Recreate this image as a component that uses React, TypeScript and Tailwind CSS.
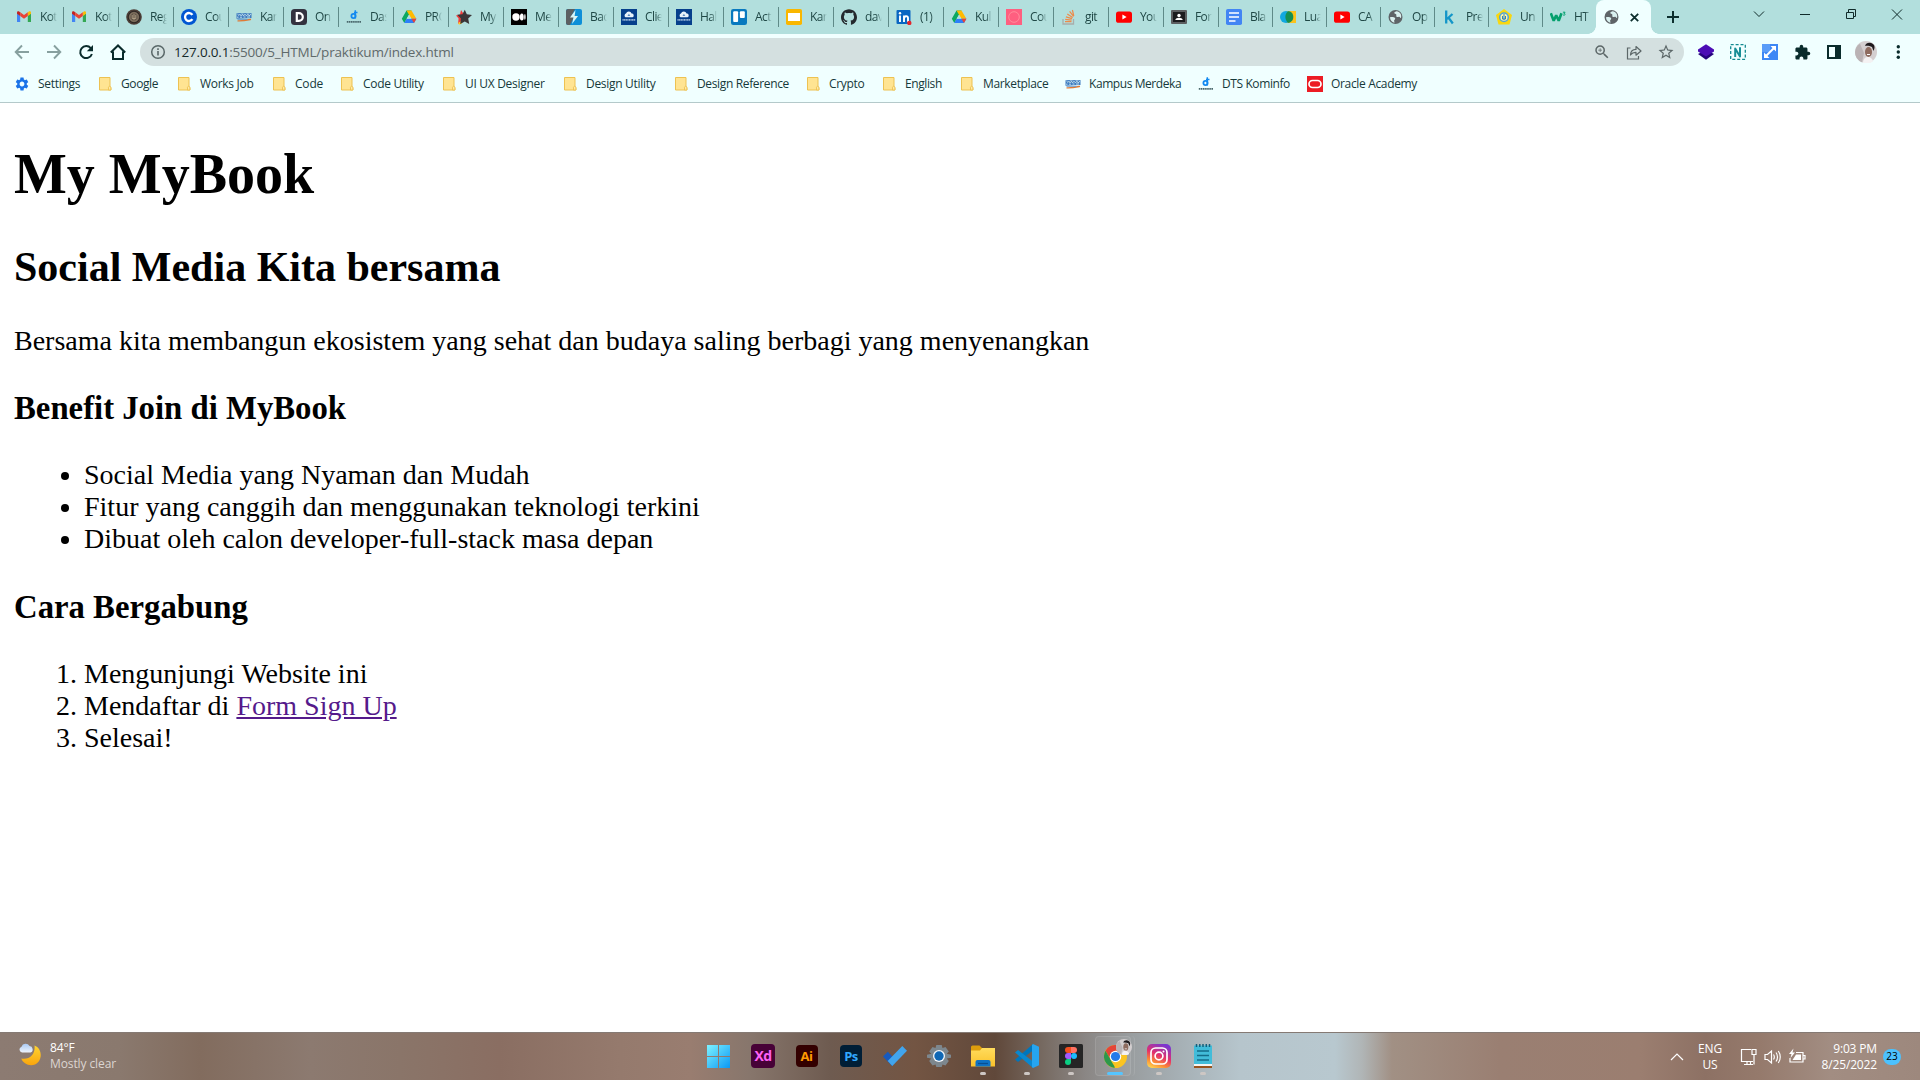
import React from "react";
import { SiGithub } from "react-icons/si";
import { MdSettings, MdExtension, MdZoomIn, MdStarBorder } from "react-icons/md";

type IconProps = { children: React.ReactNode; size?: number; box?: number };

const Glyph = ({ children, size = 16, box = 16 }: IconProps) => (
  <svg width={size} height={size} viewBox={`0 0 ${box} ${box}`} fill="none" className="shrink-0">
    {children}
  </svg>
);

const Gmail = () => (
  <Glyph>
    <path d="M1 4v9h3.200V6.800z" fill="#4285f4" />
    <path d="M15 4v9h-3.200V6.800z" fill="#34a853" />
    <path d="M11.800 3.600V7L15 4.700V3.600C15 2.300 13.600 2 12.800 2.600z" fill="#fbbc04" />
    <path d="M4.200 3.600V7L1 4.700V3.600C1 2.300 2.400 2 3.200 2.600z" fill="#c5221f" />
    <path d="M4.200 7V3.300L8 6.100l3.800-2.800V7L8 9.800z" fill="#ea4335" />
  </Glyph>
);
const Seal = () => (
  <Glyph>
    <circle cx="8" cy="8" r="7.800" fill="#4b3d36" />
    <circle cx="8" cy="8" r="5.800" fill="#5f5347" stroke="#2e2723" />
    <circle cx="8" cy="8" r="4.200" stroke="#a08f78" strokeWidth=".7" />
    <path d="M8 5v6M6.200 6v3.500M9.800 6v3.500M6.200 9.500h3.600" stroke="#b7a78c" strokeWidth=".8" />
  </Glyph>
);
const Coursera = () => (
  <Glyph>
    <circle cx="8" cy="8" r="8" fill="#0056d2" />
    <path d="M11.400 10.200A4 4 0 1 1 11.400 5.800" stroke="#fff" strokeWidth="2.300" />
  </Glyph>
);
const Kampus = () => (
  <Glyph>
    <path d="M.5 4.300l4-.3 1 .5 4-.5 2 .5 4-.5v5l-15 .8z" fill="#3f7cc0" />
    <path d="M1.500 5.200l1.500 1.200 1-1.200 1 1.700 1.500-1.700 1 1.700 1.500-1.700 1.500 1.700 1.500-1.700 1 1.700 2-1.700M1 8.200h1.500M4 8.200h2M7.500 8h2M11 8h3" stroke="#d9f0f2" strokeWidth=".8" />
    <path d="M1.500 11.900c5 .4 9-.6 13.500-1.600" stroke="#e07a35" strokeWidth="1.300" />
    <path d="M1.500 10.500h10" stroke="#5c91c9" strokeWidth=".7" />
  </Glyph>
);
const Domestika = () => (
  <Glyph>
    <rect width="16" height="16" rx="3.500" fill="#33323f" />
    <path d="M5.800 4.100h2.100a3.900 3.900 0 0 1 0 7.800h-2.100z" stroke="#fff" strokeWidth="2.200" />
  </Glyph>
);
const Digitalent = () => (
  <Glyph>
    <circle cx="7.500" cy="7" r="2.100" stroke="#1389f0" strokeWidth="1.800" />
    <path d="M9.300 1.200v8.200M8 3.600h3.500" stroke="#1389f0" strokeWidth="1.500" />
    <path d="M.8 12.800h14.500" stroke="#49676b" strokeWidth="1.700" strokeDasharray="1.600 .5" />
  </Glyph>
);
const Drive = () => (
  <Glyph>
    <path d="M5.500 1.500h5L8 5.800 3.300 14 .8 9.800z" fill="#0da960" />
    <path d="M10.500 1.500l4.900 8.300h-5L5.500 1.500z" fill="#ffba00" />
    <path d="M5.600 9.800h9.800L13 14H3.200z" fill="#2d7ff9" />
    <path d="M10.400 9.800h5L13 14z" fill="#ea4335" />
    <path d="M8 5.800l2.400 4H5.600z" fill="#b2dfdd" />
  </Glyph>
);
const StarMark = () => (
  <Glyph>
    <path d="M5 1l2 3-1 9-4 2 .6-5.500L0 6.500l4-1z" fill="#f23b3b" />
    <path d="M2 14l3-2 1 2.500-3 1.200z" fill="#ffc92e" />
    <path d="M8.800.8l2 4.400 5.200.7-3.800 3.700 1 5.400-4.400-2.500L4.200 15l.7-5.400-3.700-3.800 5.200-.6z" fill="#3b3638" />
  </Glyph>
);
const Medium = () => (
  <Glyph>
    <rect width="16" height="16" fill="#000" />
    <circle cx="5" cy="8" r="3.700" fill="#fff" />
    <ellipse cx="10.800" cy="8" rx="1.900" ry="3.500" fill="#fff" />
    <ellipse cx="13.900" cy="8" rx=".7" ry="3.100" fill="#fff" />
  </Glyph>
);
const Bolt = () => (
  <Glyph>
    <rect width="16" height="16" rx="2" fill="#0d8fd8" />
    <path d="M2 0h7L5 8h3l-4 8H2a2 2 0 0 1-2-2V2a2 2 0 0 1 2-2z" fill="#5c6062" />
    <path d="M9.500 1L4 8.500h3.500L6 15l6-8H8.600z" fill="#d9f4f5" />
  </Glyph>
);
const CloudHost = () => (
  <Glyph>
    <rect width="16" height="16" fill="#063f8c" />
    <path d="M4.500 8.200a2 2 0 0 1 .5-3.600 3 3 0 0 1 5.600-.2 2 2 0 0 1 1 3.800z" fill="#e8f2fb" />
    <path d="M7.900 4.800L6.500 7h2.800z" fill="#5c8ac0" />
    <path d="M1.500 10.800h13" stroke="#9cb9da" strokeWidth="1.700" strokeDasharray="1.200 .4" />
  </Glyph>
);
const Trello = () => (
  <Glyph>
    <rect width="16" height="16" rx="2.200" fill="#0879bf" />
    <rect x="2.200" y="2.200" width="4.900" height="10.800" rx="1" fill="#fff" />
    <rect x="8.900" y="2.200" width="4.900" height="6.800" rx="1" fill="#fff" />
  </Glyph>
);
const Slides = () => (
  <Glyph>
    <rect width="16" height="16" rx="1.800" fill="#f9b700" />
    <rect x="2" y="4" width="12" height="8" fill="#fff" />
  </Glyph>
);
const Github = () => <SiGithub size={16} color="#24292e" className="shrink-0" />;
const LinkedIn = () => (
  <Glyph>
    <rect x=".5" y="1" width="14" height="14" rx="1" fill="#0a66c2" />
    <path d="M4 6.500V13M8 13V6.500M8 10C8 6.500 12 6.500 12 9v4" stroke="#fff" strokeWidth="1.900" />
    <circle cx="4" cy="4.300" r="1.200" fill="#fff" />
    <circle cx="13.300" cy="14" r="2.200" fill="#e3242b" />
  </Glyph>
);
const PinkRing = () => (
  <Glyph>
    <rect width="16" height="16" fill="#ff5f80" />
    <circle cx="8" cy="8" r="5.300" stroke="#ff97a2" strokeWidth=".8" />
  </Glyph>
);
const StackOverflow = () => (
  <Glyph>
    <path d="M2 10v5h10.500v-5" stroke="#a9adab" strokeWidth="1.300" />
    <path d="M4 12.700h6.500M4.200 10.400l6.400.7M4.900 7.900l6.200 1.800M6.300 5l5.400 3.400M8.600 2.400l4 5M11.400 1l1.400 6" stroke="#ed8b4a" strokeWidth="1.200" />
  </Glyph>
);
const Youtube = () => (
  <Glyph>
    <rect y="2.400" width="16" height="11.400" rx="2.600" fill="#f00" />
    <path d="M6.400 5.600v4.900l4.200-2.400z" fill="#fff" />
  </Glyph>
);
const Classroom = () => (
  <Glyph>
    <rect y="1" width="16" height="14" rx="1" fill="#5c5f61" />
    <rect x="2" y="3" width="12" height="10" fill="#1b1c1e" />
    <circle cx="8" cy="6.500" r="1.700" fill="#fff" />
    <path d="M4.300 11c.4-3 7-3 7.400 0z" fill="#fff" />
  </Glyph>
);
const Docs = () => (
  <Glyph>
    <rect width="16" height="16" rx="1.800" fill="#4285f4" />
    <path d="M3 4h10M3 8h10M3 12h6.500" stroke="#fff" strokeWidth="1.500" />
  </Glyph>
);
const Overlap = () => (
  <Glyph>
    <path d="M6 2h10v12H6z" fill="#fcc21b" />
    <circle cx="6" cy="8" r="6" fill="#12a8e0" />
    <path d="M8 2.300h1.200A6 6 0 0 1 9.200 13.700H8C4.500 11 4.500 5 8 2.300z" fill="#168f51" />
  </Glyph>
);
const Globe = () => (
  <Glyph>
    <circle cx="7.500" cy="8" r="7" fill="#5f6468" />
    <path d="M2 8.300c1.500-.6 4-.5 5 .7.800 1.200-.8 1.600-.9 2.700-.1.900.8 1.400.2 2C3.800 13 2 11 2 8.300z" fill="#d9f0ef" />
    <path d="M8.600 2.200c-1 .6-2.400.6-2.300 1.800.1 1 1.600.5 2 1.400.5 1.100-.8 1.500.4 2.300 1 .6 1.500-.3 2.600 0 .9.300.8 1.500 1.700 1.200C14 5.500 12 2.700 8.600 2.200z" fill="#d9f0ef" />
  </Glyph>
);
const Kaggle = () => (
  <Glyph>
    <path d="M4.200 1.500v13M10.500 5l-5.500 5M6.500 8.600l4.300 5.900" stroke="#1496c8" strokeWidth="2.300" />
  </Glyph>
);
const Campus = () => (
  <Glyph>
    <path d="M8 0l8 6-2.500 9.500h-11L0 6z" fill="#f9d70f" />
    <circle cx="8" cy="8.300" r="4.300" fill="#fff4a8" stroke="#55a5d5" strokeWidth="1.500" />
    <path d="M8 5v6M6.500 7v3h3V7" stroke="#3384b8" strokeWidth="1" />
  </Glyph>
);
const W3 = () => (
  <Glyph>
    <path d="M.8 4.200l2.900 7.500 2.500-5.500 2.500 5.500 2.800-7.500" stroke="#04a06d" strokeWidth="2.600" strokeLinejoin="bevel" />
    <path d="M12.900 3.200h2.200l-1.200 1.200c2 .1 1.500 2.300-.8 1.600" stroke="#04a06d" strokeWidth="1" />
  </Glyph>
);
const Folder = () => (
  <Glyph>
    <path d="M2.500 1.500h10.500v9.500l.9.500v2.500H2.500z" fill="#ffe492" stroke="#edc252" />
    <path d="M11.500 14v-2.800l1.200-1.200 1.200 1.200V14z" fill="#ffe9a5" stroke="#edc252" strokeWidth=".9" />
  </Glyph>
);
const Oracle = () => (
  <Glyph>
    <rect width="16" height="16" fill="#ec1c24" />
    <rect x="2" y="4.500" width="12" height="7" rx="3.500" stroke="#fff" strokeWidth="1.700" />
  </Glyph>
);
const Gear = () => <MdSettings size={16} color="#1a73e8" className="shrink-0" />;

const wideTabs: [string, React.FC][] = [
  ["Kot", Gmail], ["Kot", Gmail], ["Reg", Seal], ["Cou", Coursera], ["Kar", Kampus], ["On", Domestika],
  ["Das", Digitalent], ["PRO", Drive], ["My", StarMark], ["Me", Medium], ["Bac", Bolt], ["Clie", CloudHost],
  ["Hal", CloudHost], ["Act", Trello], ["Kar", Slides], ["dav", Github], ["(1)", LinkedIn], ["Kul", Drive],
  ["Cou", PinkRing], ["git", StackOverflow], ["You", Youtube], ["For", Classroom],
];
const narrowTabs: [string, React.FC][] = [
  ["Bla", Docs], ["Lua", Overlap], ["CA", Youtube], ["Op", Globe], ["Pre", Kaggle], ["Un", Campus], ["HT", W3],
];

const bookmarks: [string, React.FC, string, string][] = [
  ["Settings", Gear, "w-[83px]", "tracking-[-0.3px]"],
  ["Google", Folder, "w-[79px]", "tracking-[-0.4px]"],
  ["Works Job", Folder, "w-[95px]", "tracking-[-0.3px]"],
  ["Code", Folder, "w-[68px]", "tracking-[-0.2px]"],
  ["Code Utility", Folder, "w-[102px]", "tracking-[-0.3px]"],
  ["UI UX Designer", Folder, "w-[121px]", "tracking-[-0.3px]"],
  ["Design Utility", Folder, "w-[111px]", "tracking-[-0.3px]"],
  ["Design Reference", Folder, "w-[132px]", "tracking-[-0.35px]"],
  ["Crypto", Folder, "w-[76px]", "tracking-[-0.3px]"],
  ["English", Folder, "w-[78px]", "tracking-[-0.4px]"],
  ["Marketplace", Folder, "w-[106px]", "tracking-[-0.35px]"],
  ["Kampus Merdeka", Kampus, "w-[133px]", "tracking-[-0.43px]"],
  ["DTS Kominfo", Digitalent, "w-[109px]", "tracking-[-0.4px]"],
  ["Oracle Academy", Oracle, "w-[110px]", "tracking-[-0.34px]"],
];

function Tab({ label, Icon, first, width }: { label: string; Icon: React.FC; first?: boolean; width: string }) {
  return (
    <div className={`flex h-[34px] shrink-0 items-center ${width}`}>
      <div className={`h-5 w-px ${first ? "" : "bg-[#5f8a88]"}`} />
      <div className="ml-[7px]">
        <Icon />
      </div>
      <div className="ml-2 w-[18px] whitespace-nowrap text-[12px] leading-4 tracking-[-0.6px] text-[#1f4745] [mask-image:linear-gradient(to_right,#000_60%,transparent_94%)]">
        {label}
      </div>
    </div>
  );
}

function TabStrip() {
  return (
    <div className="flex h-[34px] bg-[#b2dfdd] pl-2">
      {wideTabs.map(([label, Icon], i) => (
        <Tab key={i} label={label} Icon={Icon} first={i === 0} width="w-[55px]" />
      ))}
      {narrowTabs.map(([label, Icon], i) => (
        <Tab key={i} label={label} Icon={Icon} width="w-[54px]" />
      ))}
      <div className="relative flex h-[34px] w-[55px] shrink-0 items-center rounded-t-lg bg-[#f0ffff] pl-2">
        <div className="absolute bottom-0 -left-2 size-2 bg-[radial-gradient(circle_at_0_0,#b2dfdd_7.5px,#f0ffff_8px)]" />
        <div className="absolute -right-2 bottom-0 size-2 bg-[radial-gradient(circle_at_100%_0,#b2dfdd_7.5px,#f0ffff_8px)]" />
        <Globe />
        <svg width="9" height="9" viewBox="0 0 9 9" className="ml-2.5" stroke="#0d2f2e" strokeWidth="1.800">
          <path d="M.8.800l7.400 7.400M8.200.8L.8 8.200" />
        </svg>
      </div>
      <svg width="12" height="12" viewBox="0 0 12 12" className="mt-[11px] ml-4 shrink-0" stroke="#0d2f2e" strokeWidth="2">
        <path d="M6 0v12M0 6h12" />
      </svg>
      <div className="ml-[57px] flex h-7 shrink-0 items-center">
        {[
          "M18 11.500l5 5 5-5",
          "M18 14.500h10",
          "M18.500 12.500h7v6h-7zM20.500 12.500v-3h7v7h-2",
          "M18 9.500l10 10M28 9.500l-10 10",
        ].map((d) => (
          <svg key={d} width="46" height="28" viewBox="0 0 46 28" fill="none" stroke="#102b2a">
            <path d={d} />
          </svg>
        ))}
      </div>
    </div>
  );
}

function Portrait({ size }: { size: number }) {
  return (
    <Glyph size={size} box={22}>
      <circle cx="11" cy="11" r="11" fill="#d4cfd0" />
      <path d="M0 11a11 11 0 0 0 7 10.200L9 12 5 2.800A11 11 0 0 0 0 11z" fill="#bab3b5" />
      <ellipse cx="13.500" cy="11" rx="3.500" ry="5" fill="#8e6c60" />
      <path d="M10 5C11 1.500 15 1 18 3c2 1.500 2 4 .5 7l-1.500-4c-2-1-5-1.500-7-1z" fill="#1e1a1d" />
      <path d="M8 22c0-5 3-6 5-6s5 2 5 4.500A11 11 0 0 1 8 22z" fill="#f4f2f3" />
      <path d="M12 13.500h3" stroke="#fff" />
    </Glyph>
  );
}

function Toolbar() {
  return (
    <div className="flex h-9 items-center bg-[#f0ffff] pl-3.5">
      <div className="flex w-[126px] shrink-0 items-center gap-4">
        <Glyph>
          <path d="M15 8H2M8 1.500L1.700 8 8 14.500" stroke="#87a09f" strokeWidth="1.900" />
        </Glyph>
        <Glyph>
          <path d="M1 8h13M8 1.500L14.300 8 8 14.500" stroke="#87a09f" strokeWidth="1.900" />
        </Glyph>
        <Glyph>
          <path d="M12.800 4.200A6 6 0 1 0 13.900 10" stroke="#0a2c2c" strokeWidth="2" />
          <path d="M15 1v6.300H8.800z" fill="#0a2c2c" />
        </Glyph>
        <Glyph>
          <path d="M.8 8.500L8 1.500l7.200 7M3 7.500V15h10V7.500" stroke="#0a2c2c" strokeWidth="2" />
        </Glyph>
      </div>
      <div className="flex h-7 w-[1544px] shrink-0 items-center rounded-full bg-[#d4e0e0] pl-2.5">
        <Glyph>
          <circle cx="8" cy="8" r="6.300" stroke="#596768" strokeWidth="1.500" />
          <path d="M8 7v4.500M8 4.200v1.700" stroke="#596768" strokeWidth="1.600" />
        </Glyph>
        <div className="ml-2 text-[13.500px] leading-5 tracking-[-0.2px] whitespace-nowrap text-[#5f6a6b]">
          <span className="text-[#14292a]">127.0.0.1</span>:5500/5_HTML/praktikum/index.html
        </div>
        <div className="mr-[9px] ml-auto flex items-center gap-[15px]">
          <MdZoomIn size={18} color="#5c6768" />
          <Glyph>
            <path d="M4.500 4H1.500v11h11v-3" stroke="#5c6768" strokeWidth="1.200" />
            <path d="M4.500 11c.2-4 2-5.600 5.500-5.600V2.500L15 7l-5 4.200V8.400c-2.500-.1-4 .600-5.500 2.600z" stroke="#5c6768" strokeWidth="1.200" strokeLinejoin="round" />
          </Glyph>
          <MdStarBorder size={18} color="#5c6768" />
        </div>
      </div>
      <div className="ml-3.5 flex shrink-0 items-center gap-4">
        <Glyph>
          <path d="M0 10l8-4 8 4-8 5.800z" fill="#25047c" />
          <path d="M8 .2L16 5.500v2L8 12.500 0 7.500v-2z" fill="#4b0db5" />
        </Glyph>
        <Glyph>
          <rect x=".7" y=".7" width="14.600" height="14.600" stroke="#148a91" strokeWidth="1.300" strokeDasharray="3 1.900" />
          <path d="M5.200 13V4.500l4.800 8V3.200" stroke="#178e96" strokeWidth="2" strokeLinejoin="round" />
        </Glyph>
        <Glyph>
          <rect width="16" height="16" fill="#3d87f5" />
          <path d="M0 0h8v8H0z" fill="#5a9cf8" />
          <path d="M4 12l8-8" stroke="#fff" strokeWidth="2" />
          <path d="M8.500 2H14v5.500zM2 8.500V14h5.500z" fill="#fff" />
        </Glyph>
        <MdExtension size={17} color="#0a2c2c" className="-mr-px" />
        <Glyph>
          <path d="M2 2h12v12H2z" stroke="#0a2c2c" strokeWidth="2" />
          <path d="M9 2h5v12H9z" fill="#0a2c2c" />
        </Glyph>
        <div className="-mx-[3px]">
          <Portrait size={22} />
        </div>
        <Glyph>
          <circle cx="8.300" cy="2.800" r="1.700" fill="#0a2c2c" />
          <circle cx="8.300" cy="8" r="1.700" fill="#0a2c2c" />
          <circle cx="8.300" cy="13.200" r="1.700" fill="#0a2c2c" />
        </Glyph>
      </div>
    </div>
  );
}

function BookmarkBar() {
  return (
    <div className="flex h-[33px] border-b border-[#b4c9ca] bg-[#f0ffff] pb-px pl-3.5 text-[12px] text-[#16393a]">
      {bookmarks.map(([label, Icon, cell, tracking]) => (
        <div key={label} className={`flex h-7 shrink-0 items-center gap-2 whitespace-nowrap ${cell} ${tracking}`}>
          <Icon />
          {label}
        </div>
      ))}
    </div>
  );
}

function PageContent() {
  return (
    <main className="flow-root h-[929px] bg-white px-3.5 font-['Liberation_Serif',serif] text-[28px] leading-[normal] text-black">
      <h1 className="mt-[38.500px] mb-[37px] text-[56px] font-bold">My MyBook</h1>
      <h2 className="mb-[34.400px] text-[42px] font-bold">Social Media Kita bersama</h2>
      <p className="my-7">Bersama kita membangun ekosistem yang sehat dan budaya saling berbagi yang menyenangkan</p>
      <h3 className="mt-[33.500px] mb-[32px] text-[32.760px] font-bold">Benefit Join di MyBook</h3>
      <ul className="my-7 list-disc pl-[70px]">
        <li>Social Media yang Nyaman dan Mudah</li>
        <li>Fitur yang canggih dan menggunakan teknologi terkini</li>
        <li>Dibuat oleh calon developer-full-stack masa depan</li>
      </ul>
      <h3 className="mt-[33.500px] mb-[32px] text-[32.760px] font-bold">Cara Bergabung</h3>
      <ol className="my-7 list-decimal pl-[70px]">
        <li>Mengunjungi Website ini</li>
        <li>
          Mendaftar di <a className="text-[#551a8b] underline" href="#signup">Form Sign Up</a>
        </li>
        <li>Selesai!</li>
      </ol>
    </main>
  );
}

function AdobeTile({ label, className }: { label: string; className: string }) {
  return (
    <div className={`flex items-center justify-center rounded-[4px] leading-none font-bold tracking-[-0.5px] ${className}`}>
      {label}
    </div>
  );
}

function Slot({ children, running }: { children: React.ReactNode; running?: boolean }) {
  return (
    <div className="flex h-[47px] w-11 flex-col items-center pt-[11px]">
      <div className="flex h-6 items-center justify-center">{children}</div>
      {running && <div className="mt-1 h-[3px] w-1.5 rounded-full bg-[#cdc7c4]" />}
    </div>
  );
}

const TrayStroke = ({ d, w }: { d: string; w: number }) => (
  <svg width={w} height="18" viewBox={`0 0 ${w} 18`} fill="none" stroke="#fff" strokeWidth="1.200" className="shrink-0">
    <path d={d} />
  </svg>
);

function Taskbar() {
  return (
    <footer className="flex h-12 border-t border-[#857a74] bg-[linear-gradient(90deg,#8c7b72_0px,#8a796e_120px,#826c5e_200px,#8c7a70_310px,#8a7569_400px,#8a6e62_500px,#957a6d_620px,#997d70_690px,#87766c_750px,#6e5b50_830px,#735543_915px,#60483a_995px,#75685f_1040px,#8a8684_1085px,#999d9f_1130px,#a6b0b5_1180px,#b6c5cc_1240px,#b8c8cf_1335px,#b0b5b6_1362px,#a19084_1392px,#9a7f72_1500px,#9b7e70_1640px,#8d7164_1705px,#957a6c_1760px,#a28d82_1830px,#9d887d_1920px)] text-[12px] text-white">
      <div className="flex w-[697px] shrink-0 pl-[18px]">
        <svg width="24" height="24" viewBox="0 0 24 24" className="mt-[9px]">
          <defs>
            <linearGradient id="moon" x1="0" y1="0" x2="0" y2="1"><stop stopColor="#ffd532" /><stop offset="1" stopColor="#f9a50d" /></linearGradient>
            <linearGradient id="cloud" x1="0" y1="0" x2="0" y2="1"><stop stopColor="#a9c9f5" /><stop offset="1" stopColor="#eef4fc" /></linearGradient>
          </defs>
          <path d="M16.500 3.500c8 3 8.500 15 .5 19-6 2-12-1-13.700-6C12 18 17.500 12 16.500 3.500z" fill="url(#moon)" />
          <path d="M4 10.500a3 3 0 0 1-.5-5.800 4.300 4.300 0 0 1 8-.6 3.300 3.300 0 0 1 1 6.400z" fill="url(#cloud)" />
        </svg>
        <div className="mt-[7px] ml-2 leading-4 tracking-[-0.1px]">
          <div>84°F</div>
          <div className="text-[#dcd5d1]">Mostly clear</div>
        </div>
      </div>
      <div className="flex shrink-0">
        <Slot>
          <svg width="23" height="23" viewBox="0 0 23 23" className="mr-px">
            <defs><linearGradient id="win" x1="0" y1="0" x2="1" y2="1"><stop stopColor="#7ef2ff" /><stop offset="1" stopColor="#0b98f5" /></linearGradient></defs>
            <path d="M0 0h11v11H0zM12 0h11v11H12zM0 12h11v11H0zM12 12h11v11H12z" fill="url(#win)" />
          </svg>
        </Slot>
        <Slot><AdobeTile label="Xd" className="size-6 bg-[#470137] text-[14px] text-[#ff61f6]" /></Slot>
        <Slot><AdobeTile label="Ai" className="mr-px size-[22px] bg-[#330000] text-[13px] text-[#ff9a00]" /></Slot>
        <Slot><AdobeTile label="Ps" className="size-[22px] bg-[#001e36] text-[13px] text-[#31a8ff]" /></Slot>
        <Slot>
          <svg width="24" height="20" viewBox="0 0 24 20">
            <path d="M0 10.500l4.800-4.800 8.200 8.600-4 5.700z" fill="#185abd" />
            <path d="M4.700 15L19.300 0 24 4.700 9.300 20z" fill="#41a5ee" />
          </svg>
        </Slot>
        <Slot>
          <svg width="24" height="24" viewBox="0 0 24 24">
            <path d="M9.300 1h5.400l.8 3 3-1 3.300 4.500-2 2.300 4.200 1v2.900l-4.200.800 2 2.500-3.300 4.500-3-1-.8 2.500H9.300l-.8-2.500-3 1L2.200 17l2-2.500-4.200-.8v-2.900l4.200-1-2-2.300L5.500 3l3 1z" fill="#7d878e" />
            <circle cx="12" cy="12" r="6" fill="#f3f7fb" />
            <circle cx="12" cy="12" r="4.700" fill="#0f67b5" />
          </svg>
        </Slot>
        <Slot running>
          <svg width="24" height="24" viewBox="0 0 24 24">
            <defs><linearGradient id="folder" x1="0" y1="0" x2="0" y2="1"><stop stopColor="#ffdc5d" /><stop offset="1" stopColor="#fbc22b" /></linearGradient></defs>
            <path d="M0 3a1.500 1.500 0 0 1 1.500-1.500h7L11 4v3H0z" fill="#dd9d0c" />
            <path d="M0 6.500h9L11 4h13v18.500H0z" fill="url(#folder)" />
            <path d="M4.500 22.500V18a2 2 0 0 1 2-2h11a2 2 0 0 1 2 2v4.500z" fill="#0e72c4" />
            <path d="M7 19.500h10" stroke="#084f92" strokeWidth="1.300" />
          </svg>
        </Slot>
        <Slot running>
          <svg width="24" height="24" viewBox="0 0 24 24">
            <path d="M18 0v6.500L3 18 0 15.500z" fill="#0076bc" />
            <path d="M0 8.500L3 6l15 11.500V24z" fill="#0888d1" />
            <path d="M18 0l6 2.800v18.400L18 24l-1-1V1z" fill="#26a5f0" />
          </svg>
        </Slot>
        <Slot running>
          <svg width="24" height="24" viewBox="0 0 24 24">
            <rect width="24" height="24" rx="1.500" fill="#252525" />
            <path d="M12 3H9a3 3 0 0 0 0 6h3z" fill="#f24e1e" />
            <path d="M12 3h3a3 3 0 0 1 0 6h-3z" fill="#ff7262" />
            <path d="M12 9H9a3 3 0 0 0 0 6h3z" fill="#a259ff" />
            <circle cx="15" cy="12" r="3" fill="#1abcfe" />
            <path d="M9 15h3v3a3 3 0 1 1-3-3z" fill="#0acf83" />
          </svg>
        </Slot>
        <div className="relative flex h-[47px] w-11 flex-col items-center">
          <div className="absolute top-[3px] left-[2px] h-10 w-9 rounded-[4px] border border-white/10 bg-white/5" />
          <div className="absolute top-[3px] left-[36px] h-10 w-1.5 rounded-r-[4px] border-r border-white/10" />
          <svg width="23" height="23" viewBox="0 0 24 24" className="mt-3">
            <circle cx="12" cy="12" r="12" fill="#fbc116" />
            <path d="M1.600 6A12 12 0 0 1 22.400 6H12L6.800 15z" fill="#e33b2e" />
            <path d="M1.600 6l5.200 9 5.200 3-1 6A12 12 0 0 1 1.600 6z" fill="#229342" />
            <path d="M12 24l5.200-9L12 18l-5 -2z" fill="#fbc116" />
            <circle cx="12" cy="12" r="6" fill="#fff" />
            <circle cx="12" cy="12" r="4.800" fill="#1a73e8" />
          </svg>
          <div className="absolute top-1.5 left-[23px]"><Portrait size={16} /></div>
          <div className="mt-1 h-[3px] w-4 rounded-full bg-[#4cc2ff]" />
        </div>
        <Slot running>
          <svg width="24" height="24" viewBox="0 0 24 24" fill="none">
            <defs>
              <linearGradient id="insta" x1=".2" y1="1" x2=".65" y2="0"><stop stopColor="#ffd24f" /><stop offset=".25" stopColor="#fb8a35" /><stop offset=".55" stopColor="#e4306b" /><stop offset="1" stopColor="#7a35d1" /></linearGradient>
            </defs>
            <rect width="24" height="24" rx="5" fill="url(#insta)" />
            <rect x="4" y="4" width="16" height="16" rx="4.500" stroke="#fff" strokeWidth="1.700" />
            <circle cx="12" cy="12" r="3.900" stroke="#fff" strokeWidth="1.700" />
            <circle cx="16.500" cy="7.500" r="1" fill="#fff" />
          </svg>
        </Slot>
        <Slot running>
          <svg width="18" height="24" viewBox="0 0 18 24">
            <path d="M0 1.500h18V21H0z" fill="#42bcd9" />
            <path d="M0 20h18v2H0z" fill="#f4f4f2" />
            <path d="M0 22h18v2H0z" fill="#99521c" />
            <path d="M2.500 0v3M5.800 0v3M9 0v3M12.300 0v3M15.500 0v3" stroke="#145f7b" strokeWidth="1.500" />
            <path d="M3 7h12M3 11.500h12M3 16h12" stroke="#146c89" strokeWidth="1.500" />
          </svg>
        </Slot>
      </div>
      <div className="flex grow items-center pl-[445px]">
        <TrayStroke w={14} d="M1 12l6-6 6 6" />
        <div className="ml-[13px] w-[26px] text-center leading-4 tracking-[-0.1px]">ENG<br />US</div>
        <div className="ml-[17px] flex gap-[7px]">
          <TrayStroke w={17} d="M11 1.500H1.500v12H13M4 16.500h9M7 13.500v3M10.500 13.500v3M12 1.500h4v5h-4zM14 6.500v10" />
          <TrayStroke w={17} d="M1 6.500h2.500L7.500 3v12l-4-3.500H1zM9.500 6.500c1 1.500 1 3.500 0 5M12 4.500c2 2.500 2 6.500 0 9M14.300 3c2.600 3.500 2.600 8.500 0 12" />
          <svg width="18" height="18" viewBox="0 0 18 18" fill="none" stroke="#fff" strokeWidth="1.200">
            <path d="M8 4.500h7v9.500H2V10M15 7.500h2v3.500h-2" />
            <path d="M8 6.500h5v5.500H4.500z" fill="#fff" stroke="none" />
            <path d="M5.500.5L1 6h2.500l-1 4L7 4.500H4.500z" fill="#fff" stroke="none" />
          </svg>
        </div>
        <div className="ml-[11px] w-[60px] text-right leading-4 tracking-[-0.15px] whitespace-nowrap">
          <div>9:03 PM</div>
          <div>8/25/2022</div>
        </div>
        <div className="ml-1.5 flex h-4 w-[18px] items-center justify-center rounded-full bg-[#4cc2ff] text-[10px] text-black">23</div>
      </div>
    </footer>
  );
}

export default function App() {
  return (
    <div className="h-[1080px] w-[1920px] overflow-hidden bg-white font-['Open_Sans',sans-serif]">
      <TabStrip />
      <Toolbar />
      <BookmarkBar />
      <PageContent />
      <Taskbar />
    </div>
  );
}
